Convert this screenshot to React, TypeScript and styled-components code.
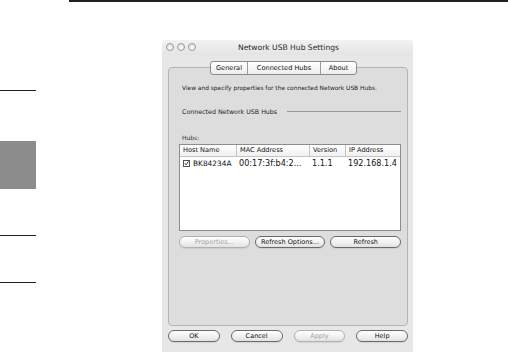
import styled, { createGlobalStyle } from 'styled-components';

const GlobalStyle = createGlobalStyle`
  html, body {
    margin: 0;
    padding: 0;
    background: #ffffff;
  }
  body {
    font-family: "DejaVu Sans", "Liberation Sans", sans-serif;
  }
`;

const hubs = [
  { host: 'BK84234A', mac: '00:17:3f:b4:2...', version: '1.1.1', ip: '192.168.1.4' },
];

function App() {
  return (
    <Page>
      <GlobalStyle />
      <TopRule />
      <Body>
        <Side>
          <SideRule top={88} />
          <SideBlock />
          <SideRule top={46} />
          <SideRule top={46} />
        </Side>
        <Window>
          <TitleBar>
            <Lights>
              <Light />
              <Light />
              <Light />
            </Lights>
            <Title>Network USB Hub Settings</Title>
          </TitleBar>
          <TabBox>
            <Tabs>
              <Tab width={36}>General</Tab>
              <Tab width={73}>Connected Hubs</Tab>
              <Tab width={36}>About</Tab>
            </Tabs>
            <Description>View and specify properties for the connected Network USB Hubs.</Description>
            <Section>
              <SectionLabel>Connected Network USB Hubs</SectionLabel>
              <SectionLine />
            </Section>
            <HubsLabel>Hubs:</HubsLabel>
            <Table>
              <HeadCell>Host Name</HeadCell>
              <HeadCell>MAC Address</HeadCell>
              <HeadCell>Version</HeadCell>
              <HeadCell last>IP Address</HeadCell>
              {hubs.map((h) => (
                <Row key={h.host}>
                  <HostCell>
                    <Check>
                      <svg width="7" height="7" viewBox="0 0 7 7">
                        <path d="M1.2 3.4 L2.8 5.4 L6.4 0.4" fill="none" stroke="#111" strokeWidth="1.2" />
                      </svg>
                    </Check>
                    {h.host}
                  </HostCell>
                  <Cell>{h.mac}</Cell>
                  <Cell>{h.version}</Cell>
                  <Cell>{h.ip}</Cell>
                </Row>
              ))}
            </Table>
            <ButtonRow>
              <Button disabled>Properties...</Button>
              <Button>Refresh Options...</Button>
              <Button>Refresh</Button>
            </ButtonRow>
          </TabBox>
          <Footer>
            <Button>OK</Button>
            <Button>Cancel</Button>
            <Button disabled>Apply</Button>
            <Button>Help</Button>
          </Footer>
        </Window>
      </Body>
    </Page>
  );
}

const Page = styled.div`
  width: 508px;
  height: 352px;
  overflow: hidden;
  background: #ffffff;
`;

const TopRule = styled.div`
  margin-left: 69px;
  height: 2px;
  background: #231f20;
`;

const Body = styled.div`
  display: flex;
  align-items: flex-start;
`;

const Side = styled.div`
  width: 36px;
  display: flex;
  flex-direction: column;
`;

const SideRule = styled.div<{ top: number }>`
  margin-top: ${({ top }) => top}px;
  height: 1px;
  background: #231f20;
`;

const SideBlock = styled.div`
  margin-top: 50px;
  height: 48px;
  background: #8d8c8c;
`;

const Window = styled.div`
  margin-left: 126px;
  margin-top: 38px;
  width: 251px;
  height: 330px;
  background: #e7e7e7;
  border-radius: 4px 4px 0 0;
  display: flex;
  flex-direction: column;
`;

const TitleBar = styled.div`
  position: relative;
  height: 15px;
  display: flex;
  align-items: center;
  justify-content: center;
  background: linear-gradient(#f2f2f2, #e4e4e4);
  border-radius: 4px 4px 0 0;
`;

const Lights = styled.div`
  position: absolute;
  left: 4px;
  top: 3px;
  display: flex;
  gap: 3px;
`;

const Light = styled.div`
  width: 8px;
  height: 8px;
  border-radius: 50%;
  box-sizing: border-box;
  border: 1px solid #9a9a9a;
  background: radial-gradient(circle at 50% 70%, #ffffff, #d6d6d6);
`;

const Title = styled.div`
  font-size: 7.6px;
  color: #2a2a2a;
  margin-left: 2px;
`;

const TabBox = styled.div`
  margin: 12px 5px 0 6px;
  height: 259px;
  box-sizing: border-box;
  border: 1px solid #b4b4b4;
  border-radius: 4px;
  background: #dddddd;
  padding: 0 6px 0 10px;
  display: flex;
  flex-direction: column;
`;

const Tabs = styled.div`
  display: flex;
  align-self: flex-start;
  margin: -7px 0 0 31px;
  border: 1px solid #8a8a8a;
  border-radius: 3px;
  overflow: hidden;
  background: linear-gradient(#ffffff, #ededed);
`;

const Tab = styled.div<{ width: number }>`
  width: ${({ width }) => width}px;
  box-sizing: border-box;
  height: 12px;
  line-height: 12px;
  text-align: center;
  font-size: 6.6px;
  color: #111;
  border-left: 1px solid #9a9a9a;
  &:first-child {
    border-left: none;
  }
`;

const Description = styled.div`
  margin-top: 10px;
  font-size: 5.9px;
  color: #222;
  margin-left: 3px;
`;

const Section = styled.div`
  margin-top: 17px;
  display: flex;
  align-items: center;
  gap: 10px;
  padding-left: 3px;
`;

const SectionLabel = styled.div`
  font-size: 6.3px;
  color: #222;
`;

const SectionLine = styled.div`
  flex: 1;
  height: 1px;
  background: #9a9a9a;
`;

const HubsLabel = styled.div`
  margin-top: 19px;
  font-size: 6px;
  color: #333;
  padding-left: 3px;
`;

const Table = styled.div`
  margin-top: 3px;
  height: 85px;
  background: #ffffff;
  border: 1px solid #8c8c8c;
  display: grid;
  grid-template-columns: 57px 73px 36px 1fr;
  grid-auto-rows: min-content;
`;

const HeadCell = styled.div<{ last?: boolean }>`
  font-size: 6.6px;
  color: #111;
  height: 11px;
  line-height: 11px;
  padding-left: 3px;
  border-bottom: 1px solid #c4c4c4;
  border-right: ${({ last }) => (last ? 'none' : '1px solid #c4c4c4')};
  background: linear-gradient(#ffffff, #f0f0f0);
`;

const Row = styled.div`
  display: contents;
`;

const Cell = styled.div`
  font-size: 8.1px;
  color: #111;
  height: 13px;
  line-height: 13px;
  padding-left: 2px;
  white-space: nowrap;
`;

const HostCell = styled.div`
  display: flex;
  align-items: center;
  gap: 3px;
  font-size: 7.4px;
  color: #111;
  height: 13px;
  padding-left: 3px;
  white-space: nowrap;
`;

const Check = styled.span`
  width: 7px;
  height: 7px;
  flex-shrink: 0;
  box-sizing: border-box;
  border: 1px solid #555;
  background: #fff;
  display: inline-flex;
  align-items: center;
  justify-content: center;
  svg {
    margin-top: -1px;
  }
`;

const ButtonRow = styled.div`
  margin-top: 5px;
  display: flex;
  gap: 5px;
  & > * {
    flex: 1;
  }
`;

const Button = styled.button`
  height: 12px;
  padding: 0;
  border: 1px solid ${({ disabled }) => (disabled ? '#b0b0b0' : '#6a6a6a')};
  border-radius: 7px;
  background: linear-gradient(#ffffff, #f2f2f2 50%, #e2e2e2);
  font-family: "DejaVu Sans", "Liberation Sans", sans-serif;
  font-size: 6.5px;
  line-height: 10px;
  color: ${({ disabled }) => (disabled ? '#a2a2a2' : '#111')};
  box-shadow: 0 1px 1px rgba(0, 0, 0, 0.08);
`;

const Footer = styled.div`
  margin: 4px 5px 0 6px;
  display: grid;
  grid-template-columns: repeat(4, 1fr);
  column-gap: 11px;
`;

export default App;
